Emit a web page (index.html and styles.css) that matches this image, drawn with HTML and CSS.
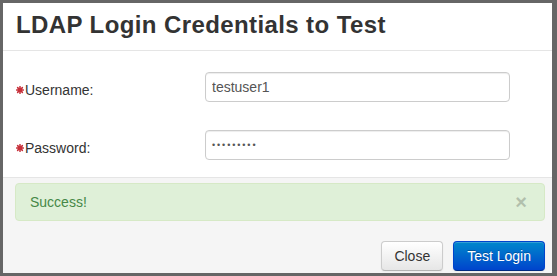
FILE: index.html
```html
<!DOCTYPE html>
<html>
<head>
<meta charset="utf-8">
<link rel="stylesheet" href="styles.css">
</head>
<body>
<div class="modal">
  <div class="modal-header">
    <h3 class="title">LDAP Login Credentials to Test</h3>
  </div>
  <div class="modal-body">
    <div class="row">
      <label class="label"><svg class="req" width="8" height="8" viewBox="0 0 8 8"><g stroke="#c7303a" stroke-width="1.5" stroke-linecap="round"><line x1="4" y1="0.6" x2="4" y2="7.4"/><line x1="0.6" y1="4" x2="7.4" y2="4"/><line x1="1.6" y1="1.6" x2="6.4" y2="6.4"/><line x1="6.4" y1="1.6" x2="1.6" y2="6.4"/></g><circle cx="4" cy="4" r="2.3" fill="#c7303a"/></svg>Username:</label>
      <input class="input" type="text" value="testuser1">
    </div>
    <div class="row">
      <label class="label"><svg class="req" width="8" height="8" viewBox="0 0 8 8"><g stroke="#c7303a" stroke-width="1.5" stroke-linecap="round"><line x1="4" y1="0.6" x2="4" y2="7.4"/><line x1="0.6" y1="4" x2="7.4" y2="4"/><line x1="1.6" y1="1.6" x2="6.4" y2="6.4"/><line x1="6.4" y1="1.6" x2="1.6" y2="6.4"/></g><circle cx="4" cy="4" r="2.3" fill="#c7303a"/></svg>Password:</label>
      <div class="input dots">•••••••••</div>
    </div>
  </div>
  <div class="modal-footer">
    <div class="alert">
      <span>Success!</span>
      <span class="close">×</span>
    </div>
    <div class="buttons">
      <button class="btn">Close</button>
      <button class="btn btn-primary">Test Login</button>
    </div>
  </div>
</div>
</body>
</html>
```

FILE: styles.css
```css
html, body {
  margin: 0;
  padding: 0;
}
body {
  background: #666666;
  padding: 3px 5px 3px 3px;
  font-family: "Liberation Sans", Arial, sans-serif;
  font-size: 14px;
  color: #333;
}
.modal {
  background: #fff;
  height: 270px;
  display: flex;
  flex-direction: column;
}
.modal-header {
  padding: 7px 13px 10px;
  border-bottom: 1px solid #e5e5e5;
}
.title {
  margin: 0;
  font-size: 24px;
  line-height: 30px;
  font-weight: bold;
  letter-spacing: 0.4px;
  color: #333;
}
.modal-body {
  padding: 21px 42px 17px 13px;
  display: flex;
  flex-direction: column;
  gap: 28px;
}
.row {
  display: flex;
  align-items: flex-start;
}
.label {
  width: 189px;
  padding-top: 8px;
  line-height: 20px;
  display: flex;
  align-items: center;
  color: #333;
}
.req {
  margin: 0 1px 0 0;
  flex: none;
}
.input {
  flex: 1;
  box-sizing: border-box;
  height: 30px;
  padding: 4px 6px;
  border: 1px solid #cccccc;
  border-radius: 4px;
  font-family: "Liberation Sans", Arial, sans-serif;
  font-size: 14px;
  line-height: 20px;
  color: #555;
  background: #fff;
  box-shadow: inset 0 1px 1px rgba(0,0,0,0.075);
  margin: 0;
}
.dots {
  font-size: 9px;
  letter-spacing: 1.9px;
  color: #555;
  line-height: 20px;
}
.modal-footer {
  flex: 1;
  background: #f5f5f5;
  border-top: 1px solid #e5e5e5;
  padding: 5px 7px 0 12px;
  display: flex;
  flex-direction: column;
}
.alert {
  display: flex;
  justify-content: space-between;
  align-items: center;
  padding: 8px 17px 8px 14px;
  line-height: 20px;
  background: #dff0d8;
  border: 1px solid #d6e9c6;
  border-radius: 4px;
  color: #468847;
}
.close {
  font-size: 20px;
  font-weight: bold;
  color: #000;
  opacity: 0.2;
  line-height: 20px;
}
.buttons {
  display: flex;
  justify-content: flex-end;
  gap: 10px;
  margin-top: 20px;
}
.btn {
  font-family: "Liberation Sans", Arial, sans-serif;
  font-size: 14px;
  line-height: 20px;
  padding: 4px 12px;
  height: 30px;
  box-sizing: border-box;
  border-radius: 4px;
  border: 1px solid #cccccc;
  border-bottom-color: #b3b3b3;
  background: linear-gradient(#ffffff, #e6e6e6);
  color: #333;
  box-shadow: inset 0 1px 0 rgba(255,255,255,.2), 0 1px 2px rgba(0,0,0,.05);
  margin: 0;
}
.btn-primary {
  color: #fff;
  padding: 4px 13px;
  border-color: #0044cc #0044cc #002a80;
  background: linear-gradient(#0088cc, #0044cc);
  text-shadow: 0 -1px 0 rgba(0,0,0,.25);
}
```
